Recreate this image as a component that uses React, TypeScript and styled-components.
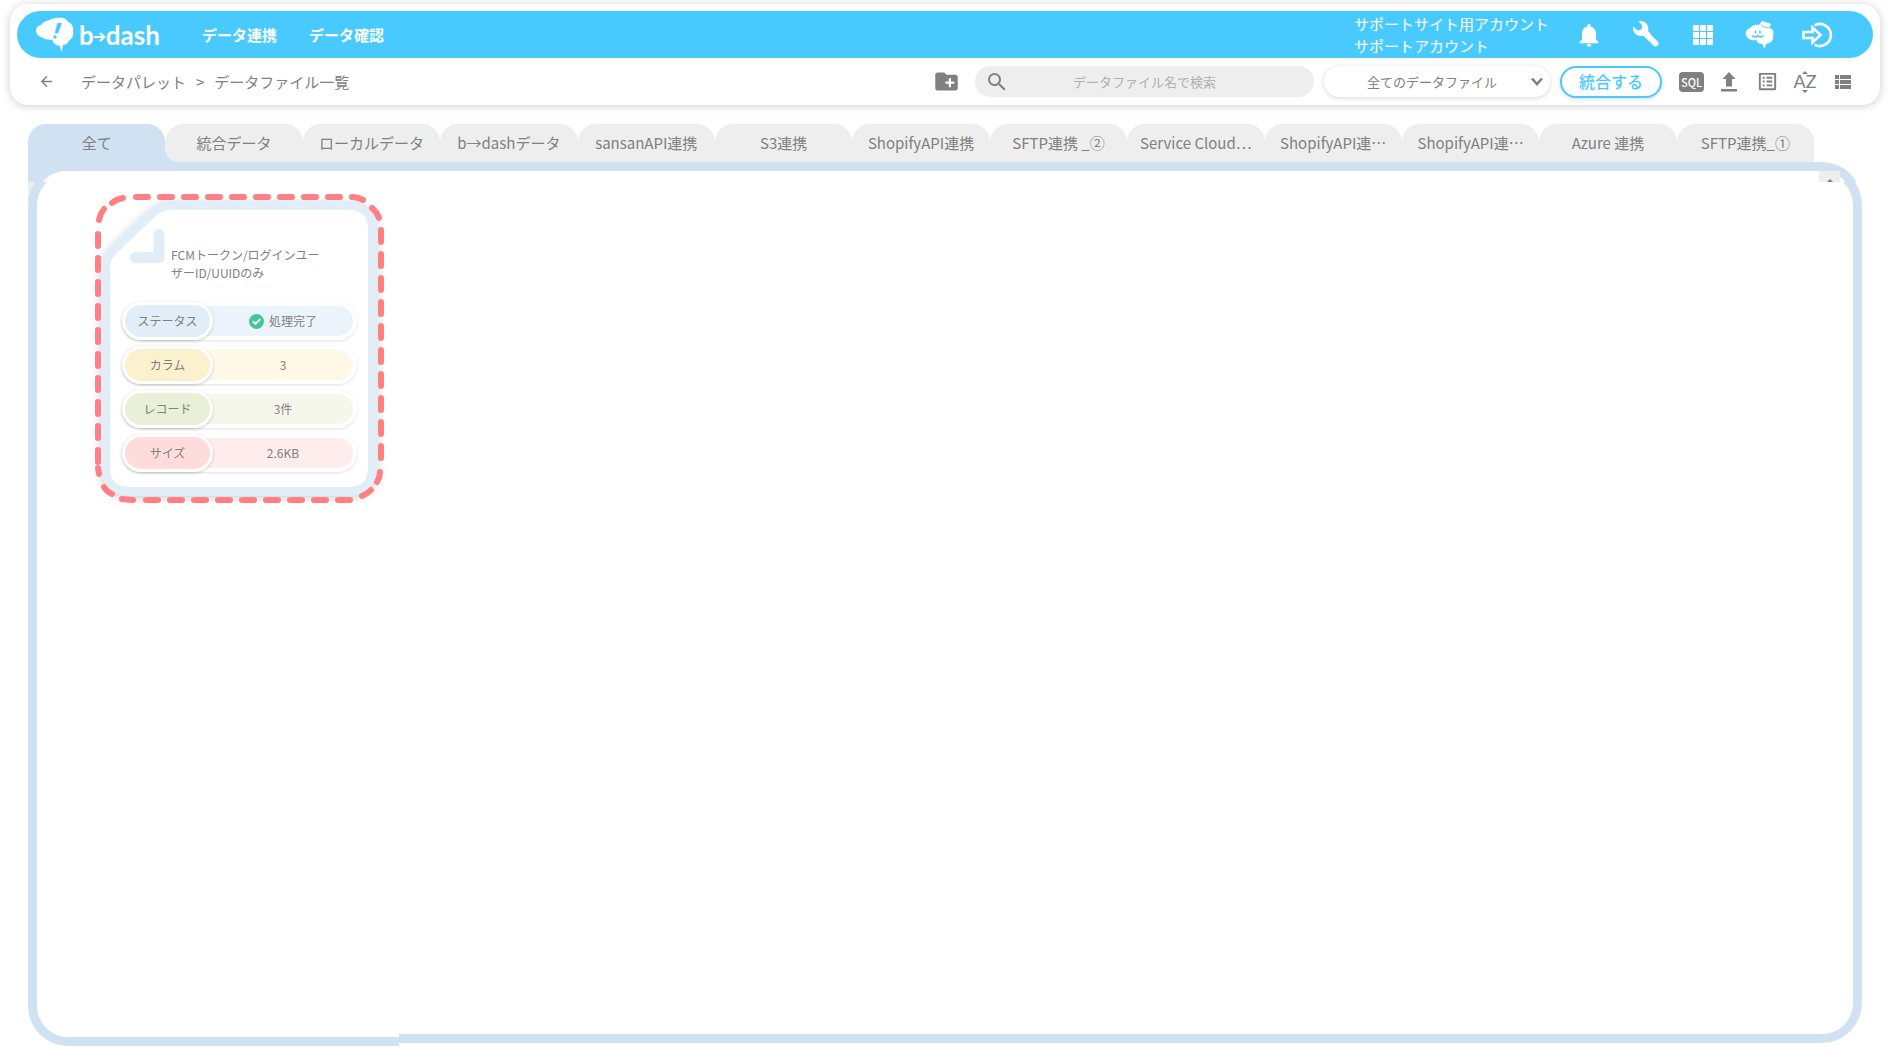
import React from 'react';
import styled, { createGlobalStyle } from 'styled-components';
import { MdArrowBack, MdCreateNewFolder, MdListAlt, MdNotifications, MdSearch } from 'react-icons/md';

const SKY = '#49caff';
const FRAME = '#d0e2f1';
const GRAY = '#808080';
const PALE = '#e1eef8';

const GlobalStyle = createGlobalStyle`
  *, *::before, *::after { box-sizing: border-box; }
  body {
    margin: 0;
    background: #fff;
    color: ${GRAY};
    font-family: "Noto Sans CJK JP", sans-serif;
    font-size: 15px;
  }
  button, input, select { font-family: inherit; color: inherit; margin: 0; }
  svg { display: block; flex: none; overflow: visible; }
`;

const Page = styled.div`
  display: flex;
  flex-direction: column;
  min-height: 100vh;
  padding: 4px 10px 17px;
`;

const Header = styled.header`
  padding: 7px 7px 0;
  border-radius: 18px;
  background: #fff;
  box-shadow: 0 1px 10px rgba(0, 0, 0, 0.2);
`;

const GlobalBar = styled.div`
  display: flex;
  align-items: center;
  height: 47px;
  padding: 0 28px 0 19px;
  border-radius: 24px;
  background: ${SKY};
  color: #fff;
`;

const Brand = styled.a`
  display: flex;
  align-items: center;
  gap: 5px;
  width: 166px;
  color: inherit;
  text-decoration: none;
`;

const Wordmark = styled.span`
  display: flex;
  align-items: center;
  font-family: Lato, sans-serif;
  font-size: 26px;
  font-weight: 700;
  line-height: 32px;
`;

const GlobalNav = styled.nav`
  display: flex;
  flex: 1;
  gap: 32px;
`;

const NavLink = styled.a`
  color: inherit;
  font-weight: 700;
  line-height: 22px;
  text-decoration: none;
`;

const Account = styled.div`
  width: 206px;
  line-height: 22px;
  white-space: nowrap;
`;

const IconButton = styled.button<{ $width: number }>`
  display: flex;
  align-items: center;
  justify-content: center;
  width: ${p => p.$width}px;
  height: 36px;
  padding: 0;
  border: 0;
  background: none;
  cursor: pointer;
`;

const Toolbar = styled.div`
  display: flex;
  align-items: center;
  gap: 10px;
  height: 47px;
  padding: 0 11px 0 21px;
`;

const Crumbs = styled.nav`
  display: flex;
  flex: 1;
  align-items: center;
  gap: 10px;
  line-height: 22px;
  white-space: nowrap;
`;

const CrumbLink = styled.a`
  color: inherit;
  text-decoration: none;
`;

const BackLink = styled(CrumbLink)`
  width: 33px;
`;

const SearchBox = styled.label`
  display: flex;
  align-items: center;
  width: 339px;
  height: 31px;
  padding: 0 34px 0 10px;
  border-radius: 16px;
  background: #eee;
`;

const SearchInput = styled.input`
  flex: 1;
  min-width: 0;
  border: 0;
  outline: 0;
  background: none;
  font-size: 13px;
  text-align: center;
  &::placeholder { color: #b0b0b0; opacity: 1; }
`;

const FilterBox = styled.label`
  position: relative;
  width: 226px;
  height: 31px;
  border-radius: 16px;
  background: #fff;
  box-shadow: 0 1px 5px rgba(0, 0, 0, 0.16);
`;

const FilterSelect = styled.select`
  width: 100%;
  height: 100%;
  padding: 0 10px 0 0;
  border: 0;
  border-radius: 16px;
  background: none;
  font-size: 13px;
  text-align: center;
  text-align-last: center;
  appearance: none;
`;

const FilterArrow = styled.svg`
  position: absolute;
  top: 11px;
  right: 7px;
  pointer-events: none;
`;

const MergeButton = styled.button`
  width: 102px;
  height: 32px;
  padding: 0 0 2px;
  border: 2px solid ${SKY};
  border-radius: 16px;
  background: #fff;
  color: ${SKY};
  font-size: 16px;
  font-weight: 500;
  line-height: 24px;
  box-shadow: 0 1px 4px rgba(0, 0, 0, 0.14);
  cursor: pointer;
`;

const Tools = styled.div`
  display: flex;
`;

const Main = styled.main`
  display: flex;
  flex: 1;
  flex-direction: column;
  margin: 19px 18px 0;
`;

const TabList = styled.div`
  display: flex;
  width: calc(100% - 48px);
  background: linear-gradient(${FRAME}, ${FRAME}) 100px 100% / 80px 12px no-repeat;
`;

const Tab = styled.button<{ $active?: boolean; $next?: boolean }>`
  flex: 1 1 0;
  min-width: 0;
  height: 38px;
  padding: 0 8px;
  border: 0;
  border-radius: ${p => (p.$next ? '18px 18px 0 14px' : '18px 18px 0 0')};
  background: ${p => (p.$active ? FRAME : '#eee')};
  color: ${GRAY};
  font-size: 15px;
  line-height: 22px;
  white-space: nowrap;
  cursor: pointer;
`;

const PanelTop = styled.div`
  height: 20px;
  overflow: hidden;
`;

const PanelTopFrame = styled.div`
  height: 60px;
  padding: 9px 9px 0;
  border-radius: 0 40px 0 0;
  background: ${FRAME};
`;

const PanelTopInner = styled.div`
  display: flex;
  justify-content: flex-end;
  height: 51px;
  padding-right: 13px;
  border-radius: 28px 31px 0 0;
  background: #fff;
`;

const ScrollStub = styled.div`
  display: flex;
  justify-content: center;
  width: 21px;
  height: 11px;
  padding-top: 8px;
  background: #eee;
`;

const PanelBody = styled.div`
  display: flex;
  flex: 1;
  overflow: hidden;
  background: linear-gradient(#eee, #eee) 0 0 / 20px 20px no-repeat;
`;

const PanelLeft = styled.section`
  width: 371px;
  margin-top: -17px;
  padding: 20px 0 0 58px;
  border: 9px solid ${FRAME};
  border-right: 0;
  border-radius: 40px 0 0 40px;
  background: #fff;
`;

const PanelRight = styled.section`
  flex: 1;
  margin: -17px 0 3px;
  border: 9px solid ${FRAME};
  border-left: 0;
  border-radius: 0 40px 40px 0;
  background: #fff;
`;

const FileCard = styled.article`
  position: relative;
  width: 289px;
  padding: 52px 27px 24px;
`;

const CardArt = styled.svg`
  position: absolute;
  inset: 0;
`;

const CardTitle = styled.h2`
  position: relative;
  width: 160px;
  height: 36px;
  margin: 0 0 20px 49px;
  font-size: 12px;
  font-weight: 400;
  line-height: 18px;
`;

const Facts = styled.dl`
  position: relative;
  display: flex;
  flex-direction: column;
  gap: 6px;
  margin: 0;
`;

const Fact = styled.div<{ $tint: string }>`
  display: flex;
  align-items: center;
  height: 38px;
  border: 4px solid #fff;
  border-radius: 19px;
  background: ${p => p.$tint};
  box-shadow: 0 1px 3px rgba(0, 0, 0, 0.12);
  font-size: 12px;
  line-height: 18px;
`;

const FactName = styled.dt<{ $fill: string }>`
  display: flex;
  align-items: center;
  justify-content: center;
  width: 91px;
  height: 38px;
  margin-left: -4px;
  border: 3px solid #fff;
  border-radius: 19px;
  background: ${p => p.$fill};
  box-shadow: 0 1px 3px rgba(0, 0, 0, 0.2);
`;

const FactValue = styled.dd`
  display: flex;
  flex: 1;
  align-items: center;
  justify-content: center;
  gap: 5px;
  margin: 0;
`;

const LogoMark = () => (
  <svg width="38" height="36" viewBox="0 0 38 36" aria-hidden="true">
    <path
      fill="#fff"
      d="M5 8C7 5 10 3.500 13 3.500C16 1.500 20 .5 23 1C27 0 31 2 32 5C35.500 6 38 10 37 14C38 18 36 22 33 23.500C32 26.500 29 28 27 28L25.500 35L23.500 28.500C20 28.500 17 26.500 16.500 22.500C12 23.500 8 22 6 20.500C2 19.500 0 16 0 13.500C0 10.500 2 8.500 5 8Z"
    />
    <path d="M21.800 6.500L25.300 6.500L21.700 16L19.300 16Z" fill={SKY} stroke={SKY} strokeLinejoin="round" />
    <circle cx="19" cy="20" r="1.700" fill={SKY} />
  </svg>
);

const LogoArrow = () => (
  <svg width="12" height="12" viewBox="0 0 12 12" aria-hidden="true">
    <path d="M1 8H10M6.500 4.500L10.500 8L6.500 11.500" fill="none" stroke="#fff" strokeWidth="2" strokeLinecap="round" strokeLinejoin="round" />
  </svg>
);

const WrenchIcon = () => (
  <svg width="28" height="28" viewBox="0 0 28 28" aria-hidden="true">
    <path d="M12 11L23.500 22.500" stroke="#fff" strokeWidth="6" strokeLinecap="round" />
    <path
      fill="#fff"
      d="M6.500 .2C10 -.7 13.600 .8 15.300 4C16.500 6.300 16.400 8.500 16 10L19 13L14.500 17.500L11.500 14.600C8 15.700 4.300 14.500 2.300 11.500C1 9.500 .7 7.400 1.200 5.400L5.500 9.500L9.300 8.500L10.400 4.500Z"
    />
  </svg>
);

const GridIcon = () => (
  <svg width="20" height="20" viewBox="0 0 20 20" fill="#fff" aria-hidden="true">
    {[0, 7, 14].map(y => [0, 7, 14].map(x => <rect key={`${x}-${y}`} x={x} y={y} width="6" height="6" />))}
  </svg>
);

const MascotIcon = () => (
  <svg width="30" height="30" viewBox="0 0 30 30" aria-hidden="true">
    <path
      fill="#fff"
      d="M5 8C7 5 11 4 14 5L17 1L26 4L25 8C28 9 29 12 28 15C29 19 27 22 24 23L21 24L19.500 29L17.500 24C14 24 12 22.500 11.500 20C7 21 2 19 1 15C0 12 2 9 5 8Z"
    />
    <path d="M16 4.500C18 7 22 8.500 25.500 7.500M26 5V9" fill="none" stroke={SKY} strokeWidth=".9" />
    <path d="M10.500 11V13M15 11V13" stroke={SKY} strokeWidth="1.500" strokeLinecap="round" />
    <path d="M7.500 16C9.500 17.300 11.500 17 12.700 15.500C14 17 16 17.300 18 16" fill="none" stroke={SKY} strokeWidth="1.500" strokeLinecap="round" />
  </svg>
);

const ExitIcon = () => (
  <svg width="30" height="26" viewBox="0 0 30 26" fill="none" stroke="#fff" strokeWidth="2.600" aria-hidden="true">
    <path d="M13.500 2.900A11 11 0 1 1 13.500 23.100" strokeLinecap="round" />
    <path d="M1.500 10H10.500V5.500L18.500 13L10.500 20.500V16H1.500Z" />
  </svg>
);

const SqlIcon = () => (
  <svg width="25" height="20" viewBox="0 0 25 20" aria-hidden="true">
    <rect width="25" height="20" rx="4" fill={GRAY} />
    <text x="12.500" y="14.500" textAnchor="middle" fill="#fff" fontFamily="Noto Sans CJK JP, sans-serif" fontSize="11" fontWeight="500">
      SQL
    </text>
  </svg>
);

const UploadIcon = () => (
  <svg width="16" height="20" viewBox="0 0 16 20" fill={GRAY} aria-hidden="true">
    <path d="M8 0L14.500 7H11V14.500H5V7H1.500ZM0 17H16V19.500H0Z" />
  </svg>
);

const SortIcon = () => (
  <svg width="24" height="24" viewBox="0 0 24 24" aria-hidden="true">
    <path d="M12 1L15 4H9ZM12 23L9 20H15Z" fill={GRAY} />
    <text x="12" y="18" textAnchor="middle" fill={GRAY} fontFamily="Lato, sans-serif" fontSize="18">
      AZ
    </text>
  </svg>
);

const RowsIcon = () => (
  <svg width="16" height="14" viewBox="0 0 16 14" fill={GRAY} aria-hidden="true">
    {[0, 5, 10].map(y => (
      <path key={y} d={`M0 ${y}H4V${y + 4}H0ZM5 ${y}H16V${y + 4}H5Z`} />
    ))}
  </svg>
);

const DoneIcon = () => (
  <svg width="15" height="15" viewBox="0 0 15 15" aria-hidden="true">
    <circle cx="7.500" cy="7.500" r="7.500" fill="#46c698" />
    <path d="M4.300 7.700L6.600 9.900L10.700 5.600" fill="none" stroke="#fff" strokeWidth="1.900" strokeLinecap="round" strokeLinejoin="round" />
  </svg>
);

const FoldedSheet = styled.path`
  filter: drop-shadow(0 2px 5px rgba(0, 0, 0, 0.2));
`;

const CardBackdrop = () => (
  <CardArt width="289" height="309" viewBox="0 0 289 309" fill="none" aria-hidden="true">
    <FoldedSheet
      d="M77 11.500H253Q277.500 11.500 277.500 36V273Q277.500 297.500 253 297.500H35Q10.500 297.500 10.500 273V74Q10.500 64 17.500 57L59 17.500Q66 11.500 77 11.500Z"
      fill="#fff"
      stroke={PALE}
      strokeWidth="9"
    />
    <path d="M64 40.500V63.500H40.500" stroke={PALE} strokeWidth="11" strokeLinecap="round" strokeLinejoin="round" />
    <g stroke="#ff7f84" strokeWidth="6" strokeLinecap="round">
      <path d="M41 3H245M286 36V264M51 306H255M3 40V268" strokeDasharray="12 12" />
      <path d="M17 9Q22 5 28 4M4 26Q5 20 9 15M257 3Q263 3 268 6M277 14Q282 18 284 24M285 278Q285 283 282 288M276 296Q272 300 267 302M27 305L38 306M9 293Q12 298 17 300M3 274L4 280" />
    </g>
  </CardArt>
);

const tabs = [
  '全て',
  '統合データ',
  'ローカルデータ',
  'b→dashデータ',
  'sansanAPI連携',
  'S3連携',
  'ShopifyAPI連携',
  'SFTP連携 _②',
  'Service Cloud⋯',
  'ShopifyAPI連⋯',
  'ShopifyAPI連⋯',
  'Azure 連携',
  'SFTP連携_①',
];

const facts = [
  { name: 'ステータス', value: '処理完了', fill: '#e1eef8', tint: '#ebf4fb', done: true },
  { name: 'カラム', value: '3', fill: '#fcf1cd', tint: '#fef8e6', done: false },
  { name: 'レコード', value: '3件', fill: '#eaefd7', tint: '#f6f7eb', done: false },
  { name: 'サイズ', value: '2.6KB', fill: '#ffdcdc', tint: '#ffeded', done: false },
];

export default function App() {
  return (
    <>
      <GlobalStyle />
      <Page>
        <Header>
          <GlobalBar>
            <Brand href="#" aria-label="b→dash">
              <LogoMark />
              <Wordmark>
                b<LogoArrow />dash
              </Wordmark>
            </Brand>
            <GlobalNav>
              <NavLink href="#">データ連携</NavLink>
              <NavLink href="#">データ確認</NavLink>
            </GlobalNav>
            <Account>
              <div>サポートサイト用アカウント</div>
              <div>サポートアカウント</div>
            </Account>
            <IconButton $width={57} aria-label="お知らせ"><MdNotifications size={28} color="#fff" /></IconButton>
            <IconButton $width={57} aria-label="設定"><WrenchIcon /></IconButton>
            <IconButton $width={57} aria-label="アプリ"><GridIcon /></IconButton>
            <IconButton $width={57} aria-label="サポート"><MascotIcon /></IconButton>
            <IconButton $width={57} aria-label="ログアウト"><ExitIcon /></IconButton>
          </GlobalBar>
          <Toolbar>
            <Crumbs>
              <BackLink href="#" aria-label="戻る"><MdArrowBack size={17} /></BackLink>
              <CrumbLink href="#">データパレット</CrumbLink>
              <span>&gt;</span>
              <span>データファイル一覧</span>
            </Crumbs>
            <IconButton $width={38} aria-label="フォルダ作成"><MdCreateNewFolder size={27} /></IconButton>
            <SearchBox>
              <MdSearch size={24} />
              <SearchInput type="text" placeholder="データファイル名で検索" aria-label="データファイル名で検索" />
            </SearchBox>
            <FilterBox>
              <FilterSelect aria-label="表示するデータファイル">
                <option>全てのデータファイル</option>
              </FilterSelect>
              <FilterArrow width="12" height="10" viewBox="0 0 12 10" aria-hidden="true">
                <path d="M1 1.500L6 7L11 1.500" fill="none" stroke={GRAY} strokeWidth="2.600" />
              </FilterArrow>
            </FilterBox>
            <MergeButton>統合する</MergeButton>
            <Tools>
              <IconButton $width={38} aria-label="SQL"><SqlIcon /></IconButton>
              <IconButton $width={38} aria-label="アップロード"><UploadIcon /></IconButton>
              <IconButton $width={38} aria-label="詳細"><MdListAlt size={23} /></IconButton>
              <IconButton $width={38} aria-label="並び替え"><SortIcon /></IconButton>
              <IconButton $width={38} aria-label="一覧表示"><RowsIcon /></IconButton>
            </Tools>
          </Toolbar>
        </Header>

        <Main>
          <TabList role="tablist">
            {tabs.map((label, i) => (
              <Tab key={i} role="tab" aria-selected={i === 0} $active={i === 0} $next={i === 1}>
                {label}
              </Tab>
            ))}
          </TabList>
          <PanelTop>
            <PanelTopFrame>
              <PanelTopInner>
                <ScrollStub>
                  <svg width="6" height="3" viewBox="0 0 6 3" aria-hidden="true">
                    <path d="M3 0L6 3H0Z" fill={GRAY} />
                  </svg>
                </ScrollStub>
              </PanelTopInner>
            </PanelTopFrame>
          </PanelTop>
          <PanelBody>
            <PanelLeft>
              <FileCard>
                <CardBackdrop />
                <CardTitle>FCMトークン/ログインユーザーID/UUIDのみ</CardTitle>
                <Facts>
                  {facts.map(f => (
                    <Fact key={f.name} $tint={f.tint}>
                      <FactName $fill={f.fill}>{f.name}</FactName>
                      <FactValue>
                        {f.done && <DoneIcon />}
                        {f.value}
                      </FactValue>
                    </Fact>
                  ))}
                </Facts>
              </FileCard>
            </PanelLeft>
            <PanelRight />
          </PanelBody>
        </Main>
      </Page>
    </>
  );
}
